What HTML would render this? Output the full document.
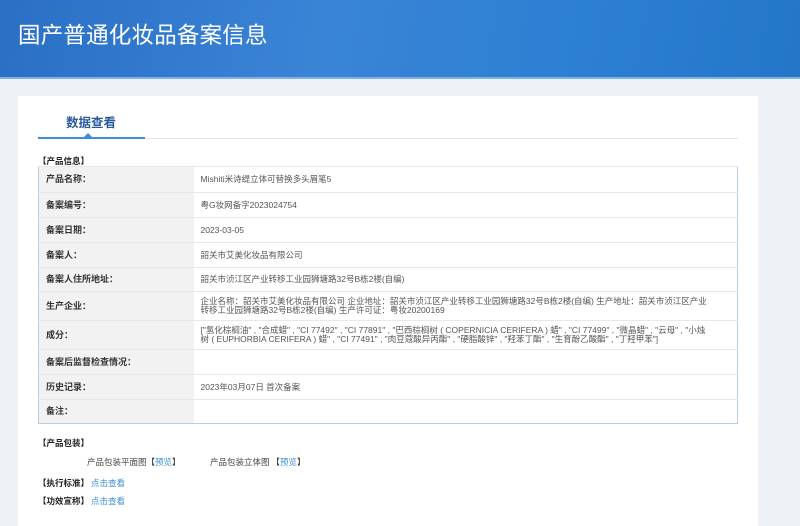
<!DOCTYPE html>
<html><head><meta charset="utf-8"><style>
*{margin:0;padding:0;box-sizing:border-box}
body{width:800px;height:513px;overflow:hidden;background:#eef2f6;font-family:"Liberation Sans","Noto Sans CJK SC",sans-serif;color:#333;position:relative}
.hdr{position:absolute;left:0;top:0;width:800px;height:79px;background:linear-gradient(100deg,#2a6fc4 0%,#3a84d6 40%,#2d80d4 70%,#2376c8 100%);border-bottom:2px solid #7fb0e6}
.hdr h1{position:absolute;left:18px;top:18px;font-size:22.5px;font-weight:normal;color:#fff;letter-spacing:0.2px;font-family:"Noto Sans CJK SC",sans-serif}
.card{position:absolute;left:18px;top:96px;width:740px;height:430px;background:#fff}
.tab{position:absolute;left:66px;top:112px;font-size:12.5px;color:#2a5a9c;font-weight:bold;font-family:"Noto Sans CJK SC",sans-serif}
.line{position:absolute;left:38px;top:138px;width:700px;height:1px;background:#e4e4e4}
.bl{position:absolute;left:38px;top:137px;width:107px;height:2px;background:#3b8fd8}
.tri{position:absolute;left:84px;top:133px;width:0;height:0;border-left:4px solid transparent;border-right:4px solid transparent;border-bottom:4px solid #3b8fd8}
.sec{position:absolute;left:38px;font-size:8.5px;font-weight:bold;color:#222;font-family:"Noto Sans CJK SC",sans-serif}
table{position:absolute;left:38px;top:166px;width:700px;border-collapse:collapse;border:1px solid #b8cce6;font-size:8.5px;font-family:"Liberation Sans","Noto Sans CJK SC",sans-serif}
td{border-top:1px solid #e8e8e8;padding:0 30px 0 7px;vertical-align:middle;color:#555;line-height:9px}
td.l{width:155px;background:#f2f2f2;font-weight:bold;color:#333;font-size:9px;padding-right:0}
.lk{color:#3b8fd8}
.t{position:absolute;font-size:8.5px;font-family:"Noto Sans CJK SC",sans-serif;color:#444}
</style></head><body>
<div class="hdr"><h1>国产普通化妆品备案信息</h1></div>
<div class="card"></div>
<div class="tab">数据查看</div>
<div class="line"></div><div class="bl"></div><div class="tri"></div>
<div class="sec" style="top:155px">【产品信息】</div>
<table>
<tr style="height:26px"><td class="l">产品名称：</td><td>Mishiti米诗缇立体可替换多头眉笔5</td></tr>
<tr style="height:25px"><td class="l">备案编号：</td><td>粤G妆网备字2023024754</td></tr>
<tr style="height:25px"><td class="l">备案日期：</td><td>2023-03-05</td></tr>
<tr style="height:25px"><td class="l">备案人：</td><td>韶关市艾美化妆品有限公司</td></tr>
<tr style="height:24px"><td class="l">备案人住所地址：</td><td>韶关市浈江区产业转移工业园狮塘路32号B栋2楼(自编)</td></tr>
<tr style="height:29px"><td class="l">生产企业：</td><td>企业名称：韶关市艾美化妆品有限公司 企业地址：韶关市浈江区产业转移工业园狮塘路32号B栋2楼(自编) 生产地址：韶关市浈江区产业转移工业园狮塘路32号B栋2楼(自编) 生产许可证：粤妆20200169</td></tr>
<tr style="height:29px"><td class="l">成分：</td><td>["氢化棕榈油" , "合成蜡" , "CI 77492" , "CI 77891" , "巴西棕榈树 ( COPERNICIA CERIFERA ) 蜡" , "CI 77499" , "微晶蜡" , "云母" , "小烛树 ( EUPHORBIA CERIFERA ) 蜡" , "CI 77491" , "肉豆蔻酸异丙酯" , "硬脂酸锌" , "羟苯丁酯" , "生育酚乙酸酯" , "丁羟甲苯"]</td></tr>
<tr style="height:25px"><td class="l">备案后监督检查情况：</td><td></td></tr>
<tr style="height:25px"><td class="l">历史记录：</td><td>2023年03月07日 首次备案</td></tr>
<tr style="height:24px"><td class="l">备注：</td><td></td></tr>
</table>
<div class="sec" style="top:437px">【产品包装】</div>
<div class="t" style="left:87px;top:456px">产品包装平面图<span style="color:#333">【</span><span class="lk">预览</span><span style="color:#333">】</span></div>
<div class="t" style="left:210px;top:456px">产品包装立体图 <span style="color:#333">【</span><span class="lk">预览</span><span style="color:#333">】</span></div>
<div class="sec" style="top:477px">【执行标准】 <span class="lk" style="font-weight:normal">点击查看</span></div>
<div class="sec" style="top:495px">【功效宣称】 <span class="lk" style="font-weight:normal">点击查看</span></div>
</body></html>
